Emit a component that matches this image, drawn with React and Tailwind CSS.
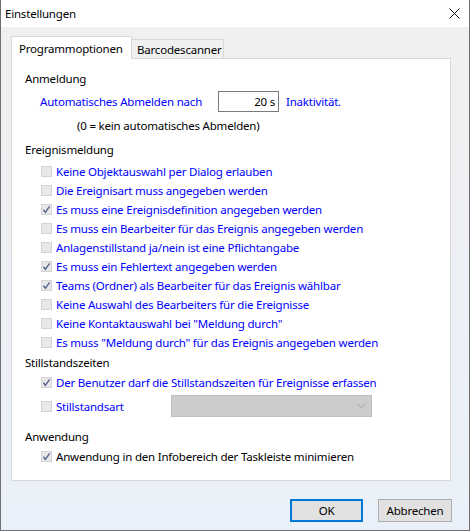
import { useState } from "react";

const ereignisOptions = [
  { label: "Keine Objektauswahl per Dialog erlauben", checked: false },
  { label: "Die Ereignisart muss angegeben werden", checked: false },
  { label: "Es muss eine Ereignisdefinition angegeben werden", checked: true },
  { label: "Es muss ein Bearbeiter für das Ereignis angegeben werden", checked: false },
  { label: "Anlagenstillstand ja/nein ist eine Pflichtangabe", checked: false },
  { label: "Es muss ein Fehlertext angegeben werden", checked: true },
  { label: "Teams (Ordner) als Bearbeiter für das Ereignis wählbar", checked: true },
  { label: "Keine Auswahl des Bearbeiters für die Ereignisse", checked: false },
  { label: 'Keine Kontaktauswahl bei "Meldung durch"', checked: false },
  { label: 'Es muss "Meldung durch" für das Ereignis angegeben werden', checked: false },
];

const CheckBox = ({ checked }) => (
  <span className="w-[11px] h-[11px] shrink-0 border border-[#d4d4d4] bg-[#e8e8e8] flex items-center justify-center">
    {checked && (
      <svg width="9" height="9" viewBox="0 0 9 9">
        <path d="M1.4 4.8 L3.4 7.3 L7.6 1.4" fill="none" stroke="#55638c" strokeWidth="1.4" />
      </svg>
    )}
  </span>
);

const CheckRow = ({ label, checked, blue = true }) => (
  <div className="h-[19px] flex items-center gap-[4px] pl-[16px]">
    <CheckBox checked={checked} />
    <span className={blue ? "text-[#0000ff]" : "text-black"}>{label}</span>
  </div>
);

export default function App() {
  const [tab] = useState("programm");

  return (
    <div
      className="w-[470px] h-[531px] flex flex-col border-x border-b border-[#6f6f6f] text-[11.5px] tracking-[-0.2px] leading-[19px] text-black"
      style={{ fontFamily: '"Segoe UI", "Noto Sans", sans-serif' }}
    >
      {/* Title bar */}
      <div className="h-[27px] shrink-0 bg-white flex items-center justify-between pl-[4px] pr-[9px]">
        <span>Einstellungen</span>
        <svg width="11" height="11" viewBox="0 0 11 11">
          <path d="M0.5 0.5 L10.5 10.5 M10.5 0.5 L0.5 10.5" stroke="#111" strokeWidth="1" />
        </svg>
      </div>

      {/* Body */}
      <div className="flex-1 flex flex-col bg-gradient-to-b from-[#f0f0f0] to-[#eaf0f9] pl-[10px] pt-[9px]">
        {/* Tabs */}
        <div className="h-[22px] flex items-end relative z-10">
          <div
            className={`h-[23px] w-[121px] -mb-px border-x border-t border-[#d9d9d9] pl-[7px] flex items-center ${
              tab === "programm" ? "bg-white" : "bg-[#f0f0f0]"
            }`}
          >
            Programmoptionen
          </div>
          <div className="h-[19px] w-[92px] bg-[#f0f0f0] border-r border-t border-[#d9d9d9] pl-[5px] flex items-center">
            Barcodescanner
          </div>
        </div>

        {/* Panel */}
        <div className="w-[440px] h-[423px] bg-white border border-[#d9d9d9] pl-[13px] pt-[10px]">
          <div className="h-[19px]">Anmeldung</div>

          <div className="mt-[3px] h-[21px] flex items-center pl-[15px]">
            <span className="text-[#0000ff] w-[178px]">Automatisches Abmelden nach</span>
            <div className="w-[61px] h-[21px] border border-[#7a7a7a] bg-white flex items-center justify-end pr-[3px]">
              20 s
            </div>
            <span className="text-[#0000ff] ml-[7px]">Inaktivität.</span>
          </div>

          <div className="mt-[4px] h-[19px] pl-[52px]">(0 = kein automatisches Abmelden)</div>

          <div className="mt-[5px] h-[19px]">Ereignismeldung</div>

          <div className="mt-[3px] flex flex-col">
            {ereignisOptions.map((o) => (
              <CheckRow key={o.label} label={o.label} checked={o.checked} />
            ))}
          </div>

          <div className="mt-[1px] h-[19px]">Stillstandszeiten</div>
          <div className="mt-[1px]">
            <CheckRow label="Der Benutzer darf die Stillstandszeiten für Ereignisse erfassen" checked />
          </div>
          <div className="mt-[3px] h-[22px] flex items-center gap-[4px] pl-[16px]">
            <CheckBox checked={false} />
            <span className="text-[#0000ff] w-[111px]">Stillstandsart</span>
            <div className="w-[201px] h-[22px] bg-[#cccccc] border border-[#bfbfbf] flex items-center justify-end pr-[5px]">
              <svg width="9" height="6" viewBox="0 0 9 6">
                <path d="M0.5 0.8 L4.5 4.8 L8.5 0.8" fill="none" stroke="#a3a3a3" strokeWidth="1" />
              </svg>
            </div>
          </div>

          <div className="mt-[10px] h-[19px]">Anwendung</div>
          <div className="mt-[1px]">
            <CheckRow label="Anwendung in den Infobereich der Taskleiste minimieren" checked blue={false} />
          </div>
        </div>

        {/* Buttons */}
        <div className="mt-[18px] ml-auto mr-[17px] flex gap-[15px]">
          <button className="w-[73px] h-[23px] bg-[#e1e1e1] border-2 border-[#0078d7] flex items-center justify-center">
            OK
          </button>
          <button className="w-[74px] h-[23px] bg-[#e1e1e1] border border-[#adadad] flex items-center justify-center">
            Abbrechen
          </button>
        </div>
      </div>
    </div>
  );
}
